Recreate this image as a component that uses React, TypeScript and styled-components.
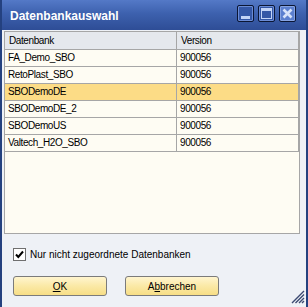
import React from "react";
import styled, { createGlobalStyle } from "styled-components";

const GlobalStyle = createGlobalStyle`
  html, body {
    margin: 0;
    padding: 0;
    background: #eef1f6;
  }
  body {
    font-family: "Liberation Sans", Arial, sans-serif;
  }
`;

const databases = [
  { name: "FA_Demo_SBO", version: "900056" },
  { name: "RetoPlast_SBO", version: "900056" },
  { name: "SBODemoDE", version: "900056" },
  { name: "SBODemoDE_2", version: "900056" },
  { name: "SBODemoUS", version: "900056" },
  { name: "Valtech_H2O_SBO", version: "900056" },
];

const selectedRow = 2;

const TitleButton = ({ kind }: { kind: "min" | "max" | "close" }) => (
  <CaptionButton $close={kind === "close"}>
    <svg width="15" height="15" viewBox="0 0 15 15">
      {kind === "min" && <rect x="3" y="10" width="9" height="3" fill="#c3d4f6" />}
      {kind === "max" && (
        <>
          <rect x="2.5" y="2.5" width="10" height="10" fill="none" stroke="#c3d4f6" />
          <rect x="2" y="2" width="11" height="3" fill="#c3d4f6" />
        </>
      )}
      {kind === "close" && (
        <path d="M3.5 3.5 L11.5 11.5 M11.5 3.5 L3.5 11.5" stroke="#d6e2fa" strokeWidth="2.6" />
      )}
    </svg>
  </CaptionButton>
);

export default function App() {
  return (
    <>
      <GlobalStyle />
      <Window>
        <TitleBar>
          <Title>Datenbankauswahl</Title>
          <CaptionButtons>
            <TitleButton kind="min" />
            <TitleButton kind="max" />
            <TitleButton kind="close" />
          </CaptionButtons>
        </TitleBar>
        <Body>
          <Grid>
            <GridRow $header>
              <Cell $header>Datenbank</Cell>
              <Cell $header>Version</Cell>
            </GridRow>
            {databases.map((db, i) => (
              <GridRow key={db.name} $selected={i === selectedRow}>
                <Cell>{db.name}</Cell>
                <Cell>{db.version}</Cell>
              </GridRow>
            ))}
          </Grid>
          <CheckRow>
            <CheckBox>
              <svg width="11" height="11" viewBox="0 0 11 11">
                <path d="M2 5.5 L4.3 8 L9 2.5" fill="none" stroke="#000" strokeWidth="2" />
              </svg>
            </CheckBox>
            <CheckLabel>Nur nicht zugeordnete Datenbanken</CheckLabel>
          </CheckRow>
          <ButtonRow>
            <DialogButton>
              <u>O</u>K
            </DialogButton>
            <DialogButton>
              A<u>b</u>brechen
            </DialogButton>
          </ButtonRow>
          <ResizeGrip>
            <svg width="14" height="14" viewBox="0 0 14 14">
              <path
                d="M13 1 L1 13 M13 4.5 L4.5 13 M13 8 L8 13 M13 11 L11 13"
                stroke="#3c4a72"
                strokeWidth="1.4"
              />
            </svg>
          </ResizeGrip>
        </Body>
      </Window>
    </>
  );
}

const Window = styled.div`
  position: relative;
  width: 308px;
  height: 307px;
  box-sizing: border-box;
  border-left: 2px solid #24417f;
  border-right: 2px solid #24417f;
  background: #eef1f6;
  display: flex;
  flex-direction: column;
`;

const TitleBar = styled.div`
  flex: none;
  height: 30px;
  display: flex;
  align-items: center;
  justify-content: space-between;
  padding: 0 10px 0 8px;
  background: linear-gradient(#5479c7 0%, #3d61ae 45%, #2e4d96 100%);
`;

const Title = styled.div`
  color: #fff;
  font-size: 12px;
  font-weight: bold;
  margin-top: 1px;
`;

const CaptionButtons = styled.div`
  display: flex;
  gap: 4px;
  align-self: flex-start;
  margin-top: 5px;
`;

const CaptionButton = styled.div<{ $close?: boolean }>`
  width: 17px;
  height: 17px;
  box-sizing: border-box;
  border: 1px solid #0b1634;
  border-radius: 2px;
  background: ${(p) => (p.$close ? "#5b7fcf" : "#3457a6")};
  box-shadow: inset 0 0 0 1px ${(p) => (p.$close ? "#86a3e2" : "#6a8bd4")};
  display: flex;
  align-items: center;
  justify-content: center;
`;

const Body = styled.div`
  flex: 1;
  display: flex;
  flex-direction: column;
  padding: 1px 6px 0 2px;
`;

const Grid = styled.div`
  height: 203px;
  box-sizing: border-box;
  border: 1px solid #a6a6a6;
  background: #fefcf3;
`;

const GridRow = styled.div<{ $header?: boolean; $selected?: boolean }>`
  display: grid;
  grid-template-columns: 172px 1fr;
  height: ${(p) => (p.$header ? "18px" : "17px")};
  background: ${(p) => (p.$header ? "#e5e8ed" : p.$selected ? "#fcdc86" : "transparent")};
`;

const Cell = styled.div<{ $header?: boolean }>`
  box-sizing: border-box;
  border-bottom: 1px solid #a6a6a6;
  border-right: 1px solid #a6a6a6;
  padding-left: ${(p) => (p.$header ? "4px" : "3px")};
  font-size: 10px;
  letter-spacing: -0.4px;
  line-height: ${(p) => (p.$header ? "17px" : "16px")};
  color: #000;
  white-space: nowrap;
  overflow: hidden;
`;

const CheckRow = styled.div`
  display: flex;
  align-items: center;
  gap: 4px;
  margin: 14px 0 0 9px;
`;

const CheckBox = styled.div`
  width: 13px;
  height: 13px;
  box-sizing: border-box;
  border: 1px solid #6f6f6f;
  background: #fff;
  display: flex;
  align-items: center;
  justify-content: center;
`;

const CheckLabel = styled.div`
  font-size: 10px;
  color: #000;
`;

const ButtonRow = styled.div`
  display: flex;
  gap: 18px;
  margin: 15px 0 0 9px;
`;

const DialogButton = styled.button`
  width: 94px;
  height: 20px;
  padding: 0;
  border: 1px solid #7b7b7b;
  border-radius: 3px;
  background: linear-gradient(#fff5cf 0%, #fbe9a6 50%, #f7de86 100%);
  font-family: "Liberation Sans", Arial, sans-serif;
  font-size: 10px;
  color: #000;
  display: flex;
  align-items: center;
  justify-content: center;
`;

const ResizeGrip = styled.div`
  position: absolute;
  right: 1px;
  bottom: 3px;
  width: 14px;
  height: 14px;
`;
